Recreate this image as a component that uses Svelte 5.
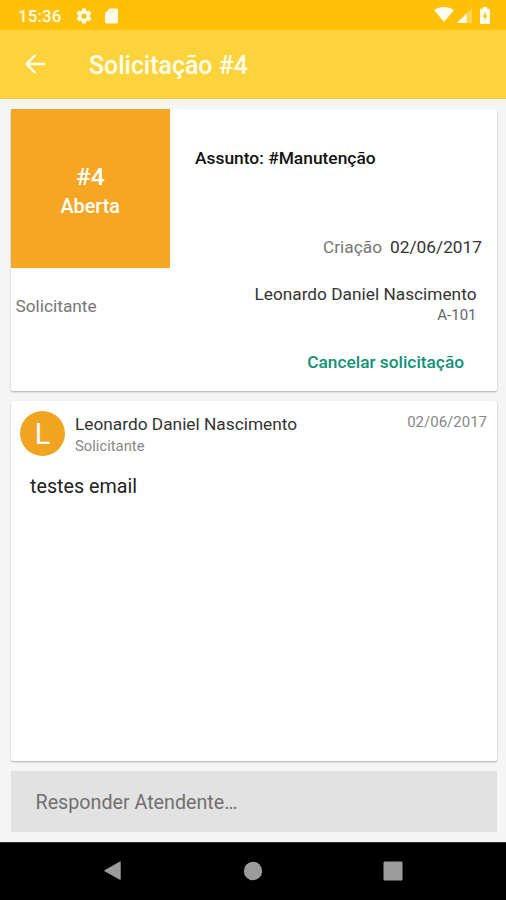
<script>
  const ticket = {
    number: '#4',
    status: 'Aberta',
    subject: '#Manutenção',
    createdAt: '02/06/2017',
    requester: 'Leonardo Daniel Nascimento',
    unit: 'A-101'
  };

  const messages = [
    {
      id: 1,
      author: 'Leonardo Daniel Nascimento',
      role: 'Solicitante',
      date: '02/06/2017',
      text: 'testes email'
    }
  ];
</script>

<div class="screen">
  <!-- System status bar -->
  <div class="status-bar">
    <span class="clock">15:36</span>
    <svg class="gear" viewBox="0 0 24 24">
      <path
        d="M19.4 13c0-.3.1-.6.1-1s0-.7-.1-1l2.1-1.6c.2-.2.3-.4.1-.7l-2-3.4c-.1-.2-.4-.3-.6-.2l-2.5 1c-.5-.4-1.1-.7-1.7-1l-.4-2.6c0-.3-.2-.5-.5-.5h-4c-.2 0-.4.2-.5.4l-.4 2.7c-.6.2-1.2.6-1.7 1l-2.5-1c-.2-.1-.5 0-.6.2l-2 3.4c-.1.2-.1.5.1.7L4.6 11c0 .3-.1.6-.1 1s0 .7.1 1l-2.1 1.6c-.2.2-.3.4-.1.7l2 3.4c.1.2.4.3.6.2l2.5-1c.5.4 1.1.7 1.7 1l.4 2.6c.1.3.3.5.5.5h4c.3 0 .5-.2.5-.4l.4-2.7c.6-.2 1.2-.6 1.7-1l2.5 1c.2.1.5 0 .6-.2l2-3.4c.1-.2.1-.5-.1-.7zM12 15.5a3.500 3.500 0 1 1 0-7 3.500 3.500 0 0 1 0 7z"
      />
    </svg>
    <svg class="sd" viewBox="0 0 14 16">
      <path d="M5 0h7.5C13.3 0 14 .7 14 1.5v13c0 .8-.7 1.5-1.5 1.5h-11C.7 16 0 15.3 0 14.500V5z" />
      <path class="pins" d="M5.500 2v2M8 2v2M10.500 2v2" />
    </svg>
    <div class="signals">
      <svg class="wifi" viewBox="0 0 20 15">
        <path d="M0 3C5.5-1 14.5-1 20 3L10 15z" />
      </svg>
      <svg class="cell" viewBox="0 0 15 15">
        <path d="M15 0v15H0z" opacity="0.35" />
        <path d="M9.5 5.500V15H0z" />
      </svg>
      <svg class="battery" viewBox="0 0 10 17">
        <path d="M3 0h4v1.700h2c.6 0 1 .4 1 1V16c0 .6-.4 1-1 1H1c-.6 0-1-.4-1-1V2.700c0-.6.4-1 1-1h2z" />
        <path class="bolt" d="M5.700 4.500L2.800 10h1.800v3.800L7.300 8.500H5.700z" />
      </svg>
    </div>
  </div>

  <header class="app-bar">
    <button class="back" aria-label="Voltar">
      <svg viewBox="0 0 20 20">
        <path d="M10.300 1L1.500 10l8.800 9M1.500 10H20" />
      </svg>
    </button>
    <h1>Solicitação {ticket.number}</h1>
  </header>

  <main>
    <section class="card summary">
      <div class="top">
        <div class="badge">
          <span class="number">{ticket.number}</span>
          <span class="state">{ticket.status}</span>
        </div>
        <div class="info">
          <div class="subject">Assunto: {ticket.subject}</div>
          <div class="created">
            <span class="label">Criação</span>
            <span>{ticket.createdAt}</span>
          </div>
        </div>
      </div>
      <div class="requester">
        <span class="requester-label">Solicitante</span>
        <div class="person">
          <span class="name">{ticket.requester}</span>
          <span class="unit">{ticket.unit}</span>
        </div>
      </div>
      <button class="cancel">Cancelar solicitação</button>
    </section>

    <section class="card messages">
      {#each messages as message (message.id)}
        <article>
          <div class="message-head">
            <div class="avatar">{message.author[0]}</div>
            <div class="author">
              <span class="name">{message.author}</span>
              <span class="role">{message.role}</span>
            </div>
            <span class="date">{message.date}</span>
          </div>
          <p>{message.text}</p>
        </article>
      {/each}
    </section>

    <button class="reply">Responder Atendente…</button>
  </main>

  <!-- System navigation -->
  <nav>
    <svg viewBox="0 0 20 22"><path d="M18.500 1.200v18.600c0 .8-.4 1-1 .7L.7 11.200c-.5-.3-.5-.8 0-1.100L17.500.6c.6-.4 1-.2 1 .6z" /></svg>
    <svg viewBox="0 0 20 20"><circle cx="10" cy="10" r="9.2" /></svg>
    <svg viewBox="0 0 20 20"><rect x="0.5" y="0.5" width="19" height="19" rx="1" /></svg>
  </nav>
</div>

<style>
  :global(body) {
    margin: 0;
  }

  .screen {
    display: flex;
    flex-direction: column;
    height: 900px;
    overflow: hidden;
    background: #f5f5f5;
    color: #333;
    font-family: Roboto, sans-serif;
    font-size: 17.3px;
  }

  button {
    border: 0;
    padding: 0;
    background: none;
    font: inherit;
    text-align: left;
  }

  .status-bar {
    display: flex;
    align-items: center;
    height: 30px;
    padding: 0 16px 0 18px;
    box-sizing: border-box;
    background: #ffc107;
    color: #fffbe9;
  }

  .status-bar svg {
    fill: #fffbec;
  }

  .clock {
    width: 57px;
    padding-top: 2px;
    font-size: 17px;
    font-weight: 500;
    letter-spacing: 0.1px;
  }

  .gear {
    width: 18px;
    height: 18px;
    margin-top: 1px;
  }

  .sd {
    width: 13px;
    height: 16px;
    margin-top: 1px;
    margin-left: 12px;
  }

  .sd .pins {
    fill: none;
    stroke: #ffe38a;
    stroke-width: 1.2;
  }

  .signals {
    display: flex;
    align-items: center;
    margin-left: auto;
  }

  .wifi {
    width: 20px;
    height: 15px;
    margin-top: -1px;
    margin-right: 3px;
  }

  .cell {
    width: 15px;
    height: 15px;
    margin-top: 1px;
    margin-right: 8px;
  }

  .battery {
    width: 10px;
    height: 17px;
  }

  .status-bar .bolt {
    fill: #ffc107;
  }

  .app-bar {
    display: flex;
    align-items: center;
    height: 69px;
    box-sizing: border-box;
    padding: 0 25px;
    border-bottom: 1px solid #f5cb35;
    background: #fdd33b;
    color: #fffdf0;
  }

  .back {
    width: 64px;
    color: inherit;
  }

  .back svg {
    display: block;
    width: 20px;
    height: 20px;
    fill: none;
    stroke: currentColor;
    stroke-width: 2.4;
  }

  h1 {
    margin: 3px 0 0;
    font-size: 24.9px;
    font-weight: 500;
  }

  main {
    display: flex;
    flex-direction: column;
    flex: 1;
    gap: 10px;
    padding: 10px 9px 10px 10.5px;
  }

  .card {
    box-sizing: border-box;
    border-radius: 2px;
    background: #fff;
    box-shadow: 0 1px 2px rgba(0, 0, 0, 0.3);
  }

  .summary {
    height: 282px;
  }

  .top {
    display: flex;
    height: 159px;
  }

  .badge {
    display: flex;
    flex-direction: column;
    align-items: center;
    justify-content: center;
    width: 159.5px;
    padding-top: 6px;
    box-sizing: border-box;
    background: #f5a623;
    color: #fff;
    font-weight: 500;
  }

  .number {
    font-size: 24.5px;
    line-height: 30px;
  }

  .state {
    font-size: 19.8px;
    line-height: 30px;
  }

  .info {
    display: flex;
    flex: 1;
    flex-direction: column;
    justify-content: space-between;
    padding: 39px 15px 11px 25px;
  }

  .subject {
    color: #111;
    font-size: 17.4px;
    font-weight: 500;
    line-height: 20px;
  }

  .created {
    display: flex;
    gap: 8px;
    justify-content: flex-end;
    line-height: 20px;
  }

  .label,
  .requester-label {
    color: #777;
  }

  .requester {
    display: flex;
    align-items: center;
    justify-content: space-between;
    height: 76px;
    padding: 0 20.5px 0 5px;
  }

  .person {
    display: flex;
    flex-direction: column;
    align-items: flex-end;
    padding-bottom: 4px;
  }

  .name {
    line-height: 22px;
  }

  .unit {
    color: #666;
    font-size: 15px;
    line-height: 20px;
  }

  .cancel {
    display: block;
    margin: 8px 33px 0 auto;
    color: #0f9177;
    font-weight: 500;
    line-height: 20px;
  }

  .messages {
    flex: 1;
    padding: 10px 10px 10px 9.5px;
  }

  .message-head {
    display: flex;
  }

  .avatar {
    width: 45px;
    height: 45px;
    border-radius: 50%;
    background: #f0a41f;
    color: #fff;
    font-size: 29px;
    line-height: 46px;
    text-align: center;
  }

  .author {
    display: flex;
    flex: 1;
    flex-direction: column;
    margin-left: 10px;
    padding-top: 2px;
  }

  .role {
    color: #888;
    font-size: 14.8px;
    line-height: 22px;
  }

  .date {
    padding-top: 1px;
    color: #888;
    font-size: 15px;
    line-height: 21px;
  }

  p {
    margin: 18px 10px 0;
    color: #222;
    font-size: 19.7px;
    line-height: 24px;
  }

  .reply {
    height: 61px;
    padding: 2px 25px 0;
    background: #e2e2e2;
    color: #707070;
    font-size: 19.7px;
  }

  nav {
    display: flex;
    align-items: center;
    justify-content: space-between;
    height: 58px;
    box-sizing: border-box;
    padding: 0 103px 1px;
    border-top: 1px solid #333;
    background: #000;
  }

  nav svg {
    width: 20px;
    height: 20px;
    fill: #9c9c9c;
  }
</style>
